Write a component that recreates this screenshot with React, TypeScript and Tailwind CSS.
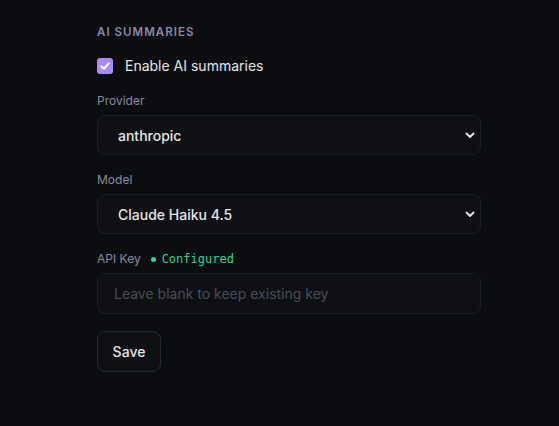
import React from "react";

function Chevron() {
  return (
    <svg width="12" height="12" viewBox="0 0 12 12" className="pointer-events-none absolute right-[5px] top-1/2 -translate-y-1/2">
      <path d="M2.5 4.5 L6 8 L9.5 4.5" fill="none" stroke="#e5e7eb" strokeWidth="1.8" strokeLinecap="round" strokeLinejoin="round" />
    </svg>
  );
}

function SelectBox({ value }: { value: string }) {
  return (
    <div className="relative">
      <select
        defaultValue={value}
        className="h-[40px] w-full appearance-none rounded-[8px] border border-[#1c1e25] bg-[#0f1014] pl-[20px] text-[14px] font-medium text-[#e4e4e7] outline-none"
      >
        <option>{value}</option>
      </select>
      <Chevron />
    </div>
  );
}

export default function App() {
  return (
    <div className="min-h-[426px] w-full bg-[#0c0d11]" style={{ fontFamily: "Inter, 'Noto Sans', sans-serif" }}>
      <div className="ml-[97px] w-[384px] pt-[24px]">
        <div className="text-[11.5px] font-semibold leading-[16px] tracking-[0.09em] text-[#8a87a6]">AI SUMMARIES</div>
        <label className="mt-[16px] flex h-[20px] items-center gap-[12px]">
          <span className="flex h-[16px] w-[16px] items-center justify-center rounded-[3px] bg-[#a98bf6]">
            <svg width="12" height="12" viewBox="0 0 12 12">
              <path d="M2.2 6.3 L4.8 8.8 L9.8 3.3" fill="none" stroke="#ffffff" strokeWidth="2" strokeLinecap="round" strokeLinejoin="round" />
            </svg>
          </span>
          <span className="text-[14px] font-normal leading-[20px] text-[#e4e4e7]">Enable AI summaries</span>
        </label>

        <div className="mt-[17px] text-[12px] leading-[16px] text-[#8a8a9c]">Provider</div>
        <div className="mt-[6px]">
          <SelectBox value="anthropic" />
        </div>

        <div className="mt-[17px] text-[12px] leading-[16px] text-[#8a8a9c]">Model</div>
        <div className="mt-[6px]">
          <SelectBox value="Claude Haiku 4.5" />
        </div>

        <div className="mt-[17px] flex items-center text-[12px] leading-[16px]">
          <span className="text-[#8a8a9c]">API Key</span>
          <span className="ml-[10px] h-[5px] w-[5px] rounded-full bg-[#34d399]" />
          <span className="ml-[6px] text-[#34d399]" style={{ fontFamily: "'DejaVu Sans Mono', monospace" }}>Configured</span>
        </div>
        <div className="mt-[6px]">
          <input
            placeholder="Leave blank to keep existing key"
            className="h-[41px] w-full rounded-[8px] border border-[#1c1e25] bg-[#0f1014] px-[16px] text-[14px] text-[#e4e4e7] outline-none placeholder:text-[#4a4c55]"
          />
        </div>

        <button className="mt-[17px] h-[41px] w-[64px] rounded-[8px] border border-[#262830] bg-[#0f1014] text-[14px] font-medium text-[#e4e4e7]">
          Save
        </button>
      </div>
    </div>
  );
}
